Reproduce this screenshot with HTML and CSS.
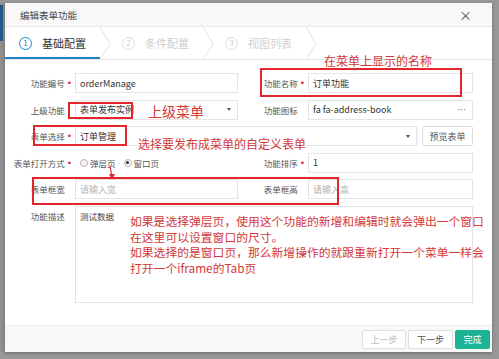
FILE: index.html
```html
<!DOCTYPE html>
<html lang="zh">
<head>
<meta charset="utf-8">
<title>编辑表单功能</title>
<link rel="stylesheet" href="styles.css">
</head>
<body>
<div class="page">
  <div class="side"><div class="side-blue"></div></div>
  <div class="dialog">
    <div class="header">
      <span class="title">编辑表单功能</span>
      <span class="close">×</span>
    </div>
    <div class="steps">
      <div class="step active"><span class="num">1</span><span class="stxt">基础配置</span></div>
      <svg class="chev" width="10" height="33" viewBox="0 0 10 33"><polyline points="0,0 10,16.5 0,33" fill="none" stroke="#e2e2e2" stroke-width="1"/></svg>
      <div class="step"><span class="num">2</span><span class="stxt">条件配置</span></div>
      <svg class="chev" width="10" height="33" viewBox="0 0 10 33"><polyline points="0,0 10,16.5 0,33" fill="none" stroke="#e2e2e2" stroke-width="1"/></svg>
      <div class="step"><span class="num">3</span><span class="stxt">视图列表</span></div>
      <svg class="chev" width="10" height="33" viewBox="0 0 10 33"><polyline points="0,0 10,16.5 0,33" fill="none" stroke="#e2e2e2" stroke-width="1"/></svg>
    </div>
    <div class="form">
      <label class="lbl">功能编号<i>•</i></label>
      <div class="inp">orderManage</div>
      <label class="lbl">功能名称<i>•</i></label>
      <div class="inp">订单功能</div>

      <label class="lbl">上级功能<i class="hid">•</i></label>
      <div class="inp sel">表单发布实例<span class="caret"></span></div>
      <label class="lbl">功能图标<i class="hid">•</i></label>
      <div class="inp sel">fa fa-address-book<span class="dots">···</span></div>

      <label class="lbl">表单选择<i>•</i></label>
      <div class="wide">
        <div class="inp sel grow">订单管理<span class="caret"></span></div>
        <div class="btn">预览表单</div>
      </div>

      <label class="lbl">表单打开方式<i>•</i></label>
      <div class="radios">
        <span class="radio"><span class="dot"></span>弹层页</span>
        <span class="radio"><span class="dot on"></span>窗口页</span>
      </div>
      <label class="lbl">功能排序<i>•</i></label>
      <div class="inp">1</div>

      <label class="lbl">表单框宽<i class="hid">•</i></label>
      <div class="inp ph">请输入宽</div>
      <label class="lbl">表单框高<i class="hid">•</i></label>
      <div class="inp ph">请输入高</div>

      <label class="lbl top">功能描述<i class="hid">•</i></label>
      <div class="area">测试数据</div>
    </div>
    <div class="footer">
      <div class="fbtn disabled">上一步</div>
      <div class="fbtn">下一步</div>
      <div class="fbtn primary">完成</div>
    </div>
  </div>

  <div class="box b1"></div>
  <div class="box b2"></div>
  <div class="box b3"></div>
  <div class="box b4"></div>
  <div class="note n1">在菜单上显示的名称</div>
  <div class="note n2">上级菜单</div>
  <div class="note n3">选择要发布成菜单的自定义表单</div>
  <div class="note n4">如果是选择弹层页，使用这个功能的新增和编辑时就会弹出一个窗口<br>在这里可以设置窗口的尺寸。<br>如果选择的是窗口页，那么新增操作的就跟重新打开一个菜单一样会<br>打开一个iframe的Tab页</div>
  <svg class="arrow" width="12" height="16" viewBox="0 0 12 16"><line x1="4" y1="1" x2="6" y2="12" stroke="#e0262c" stroke-width="1.2"/><polygon points="3,9 9,9 6,15" fill="#e0262c"/></svg>
</div>
</body>
</html>
```
FILE: styles.css
```css
* { box-sizing: border-box; }
html, body { margin: 0; padding: 0; }
body {
  font-family: "Noto Sans CJK SC", "Noto Sans", sans-serif;
  background: #969696;
}
.page {
  position: relative;
  width: 499px;
  height: 359px;
  background: #979797;
  display: flex;
  padding-top: 3px;
  overflow: hidden;
}
.side {
  width: 5px;
  height: 349px;
  background: #8f8f8f;
}
.side-blue {
  width: 3px;
  height: 36px;
  margin-top: 2px;
  background: #24598a;
}
.dialog {
  width: 487px;
  height: 349px;
  background: #fff;
  display: flex;
  flex-direction: column;
  box-shadow: 0 1px 3px rgba(0,0,0,0.3);
}
.header {
  height: 24px;
  background: #f8f8f8;
  border-bottom: 1px solid #e8e8e8;
  display: flex;
  align-items: center;
  justify-content: space-between;
  padding: 0 20px 0 15px;
}
.title { font-size: 9.5px; color: #444; }
.close { font-size: 13px; color: #555; line-height: 1; }
.steps {
  height: 33px;
  border-bottom: 1px solid #e7e7e7;
  display: flex;
  align-items: stretch;
}
.step {
  width: 95px;
  display: flex;
  align-items: center;
  padding-left: 14px;
  color: #cfcfcf;
}
.step + .chev + .step { width: 93px; padding-left: 12px; }
.step.active {
  width: 95px;
  padding-left: 14px;
  color: #333;
  border-bottom: 2px solid #1c84c6;
  padding-top: 2px;
}
.chev { flex: none; display: block; }
.num {
  width: 13px;
  height: 13px;
  border-radius: 50%;
  border: 1.3px solid #dcdcdc;
  font-size: 8px;
  line-height: 10px;
  text-align: center;
  color: #d0d0d0;
  margin-right: 10px;
}
.active .num { border-color: #1c84c6; color: #1c84c6; }
.stxt { font-size: 11px; }
.form {
  display: grid;
  grid-template-columns: 70px 163px 70px 165px;
  grid-template-rows: 20px 20px 20px 20px 20px 97px;
  row-gap: 6.6px;
  padding-top: 13px;
  font-size: 8.5px;
}
.lbl {
  display: flex;
  align-items: center;
  justify-content: flex-end;
  padding-right: 3px;
  color: #555;
  white-space: nowrap;
}
.lbl.top { align-items: flex-start; padding-top: 4px; }
.lbl i {
  font-style: normal;
  color: #e0262c;
  margin-left: 2px;
  font-size: 9px;
  font-family: "DejaVu Sans", sans-serif;
}
.lbl i.hid { visibility: hidden; }
.inp {
  border: 1px solid #e3e4e5;
  background: #fff;
  display: flex;
  align-items: center;
  padding-left: 4px;
  font-size: 9px;
  color: #333;
  position: relative;
}
.inp.ph { color: #b5b5b5; }
.sel { justify-content: space-between; padding-right: 6px; }
.caret {
  width: 0; height: 0;
  border-left: 2.5px solid transparent;
  border-right: 2.5px solid transparent;
  border-top: 3px solid #555;
}
.dots { color: #666; font-size: 9px; letter-spacing: 0; font-family: "DejaVu Sans", sans-serif; }
.wide {
  grid-column: 2 / 5;
  display: flex;
  gap: 5px;
}
.grow { flex: 1; }
.btn {
  width: 51px;
  border: 1px solid #dcdcdc;
  border-radius: 2px;
  display: flex;
  align-items: center;
  justify-content: center;
  font-size: 9px;
  color: #555;
  background: #fff;
}
.radios {
  display: flex;
  align-items: center;
  gap: 8px;
  padding-left: 5px;
  color: #555;
  font-size: 8.5px;
}
.radio { display: flex; align-items: center; }
.dot {
  width: 8px; height: 8px;
  border-radius: 50%;
  border: 1px solid #b8b8b8;
  background: #f4f4f4;
  margin-right: 2px;
  position: relative;
}
.dot.on::after {
  content: "";
  position: absolute;
  left: 1.5px; top: 1.5px;
  width: 3px; height: 3px;
  border-radius: 50%;
  background: #333;
}
.area {
  grid-column: 2 / 5;
  border: 1px solid #e3e4e5;
  padding: 3px 4px;
  font-size: 8.5px;
  color: #444;
}
.footer {
  margin-top: auto;
  height: 27px;
  background: #f8f8f8;
  border-top: 1px solid #ececec;
  display: flex;
  align-items: center;
  justify-content: flex-end;
  gap: 2px;
  padding-right: 2px;
}
.fbtn {
  height: 19px;
  padding: 0;
  border: 1px solid #dedede;
  border-radius: 2px;
  background: #fff;
  color: #555;
  font-size: 9px;
  display: flex;
  align-items: center;
  justify-content: center;
  width: 45px;
  white-space: nowrap;
}
.fbtn.disabled { color: #bdbdbd; width: 44px; }
.fbtn.primary {
  background: #1ab394;
  border-color: #1ab394;
  color: #fff;
  width: 35px;
}
.box {
  position: absolute;
  border: 2px solid #e3262c;
}
.b1 { left: 260px; top: 68px; width: 202px; height: 29px; }
.b2 { left: 68px; top: 102px; width: 65px; height: 17px; }
.b3 { left: 33px; top: 125px; width: 94px; height: 21px; }
.b4 { left: 32px; top: 177px; width: 307px; height: 28px; }
.note {
  position: absolute;
  color: #d3383b;
  font-size: 12px;
  line-height: 14px;
  white-space: nowrap;
}
.n1 { left: 324px; top: 54px; }
.n2 { left: 148px; top: 103px; font-size: 14px; line-height: 16px; }
.n3 { left: 138px; top: 137px; }
.n4 { left: 130px; top: 213px; line-height: 15.5px; font-size: 11.8px; }
.arrow { position: absolute; left: 106px; top: 165px; }
```
